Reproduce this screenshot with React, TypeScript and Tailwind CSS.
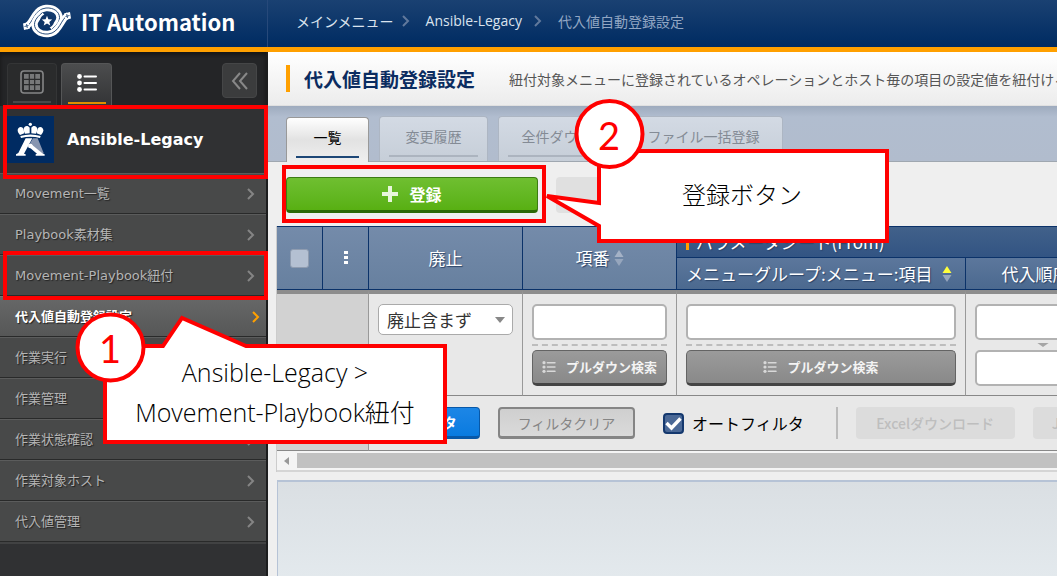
import type { ReactNode } from 'react';

const MENU_ITEMS = [
  'Movement一覧',
  'Playbook素材集',
  'Movement-Playbook紐付',
  '代入値自動登録設定',
  '作業実行',
  '作業管理',
  '作業状態確認',
  '作業対象ホスト',
  '代入値管理',
];
const ACTIVE_ITEM = '代入値自動登録設定';

function Chevron({ className }: { className: string }) {
  return (
    <svg viewBox="0 0 8 12" className={`h-3 w-2 shrink-0 ${className}`} fill="none" stroke="currentColor" strokeWidth="2">
      <path d="M1 1l5 5-5 5" />
    </svg>
  );
}

function ListIcon({ className }: { className: string }) {
  return (
    <svg viewBox="0 0 20 18" className={className} fill="currentColor">
      {[2.5, 9, 15.5].map((y) => (
        <g key={y}>
          <circle cx="2.5" cy={y} r="2.4" />
          <rect x="6.5" y={y - 1.1} width="13.5" height="2.2" rx="1" />
        </g>
      ))}
    </svg>
  );
}

function SortIcon({ active = false }: { active?: boolean }) {
  return (
    <svg viewBox="0 0 10 18" className="h-[18px] w-[10px] shrink-0">
      <path d="M5 1l4.5 7h-9z" fill={active ? '#ffff3c' : '#a4b2c6'} />
      <path d="M5 17l4.5-7h-9z" fill="#96a6bd" />
    </svg>
  );
}

function BrandLogo() {
  const band = 'M3 22.5C10 20 11 5 23 4c8-.6 13.500 4 13.500 9.500 0 5-4 8.500-8 12';
  return (
    <svg viewBox="0 0 48 34" className="h-[34px] w-12" fill="none">
      {[0, 180].map((turn) => (
        <g key={turn} transform={`rotate(${turn} 24 17)`}>
          <path d={band} stroke="#fff" strokeWidth="6.4" />
          <path d={band} stroke="#123a6c" strokeWidth="0.9" />
          <path d="M0 19.500l5.500-1.500 1.500 6.500-6 1.500z" fill="#fff" />
          <path d="M1.500 22.500l4-1M3.500 20l.8 4" stroke="#123a6c" strokeWidth="0.8" />
        </g>
      ))}
      <circle cx="24" cy="17" r="7" fill="#0f3567" />
      <path d="M24 11.800l1.400 3.500 3.800.2-2.900 2.400 1 3.700-3.300-2-3.300 2 1-3.700-2.900-2.400 3.800-.2z" fill="#fff" />
    </svg>
  );
}

function AnsibleIcon() {
  return (
    <svg viewBox="0 0 141 141" className="h-[47px] w-[47px] bg-[#002b62]">
      <g fill="#fff">
        <circle cx="70" cy="25" r="5" />
        <path d="M32 43c0-9 9-13 15-8 3 3 4 10 5 17l-13 5c-4-4-7-9-7-14z" />
        <path d="M109 43c0-9-9-13-15-8-3 3-4 10-5 17l13 5c4-4 7-9 7-14z" />
        <path d="M50 40c0-10 12-14 18-5v17l-14 1c-2-4-4-8-4-13z" />
        <path d="M91 40c0-10-12-14-18-5v17l14 1c2-4 4-8 4-13z" />
        <path d="M40 60c20-6 41-6 61 0l-2 6c-19-5-38-5-57 0z" />
        <path d="M56 67h20L51 113l5 2v4H27v-4l7-4z" />
      </g>
      <path d="M78 67h14l18 44-2 4-32-26-8-5z" fill="#8795b0" />
      <circle cx="70" cy="90" r="7" fill="#fff" />
      <path d="M72 84l36 29 5 2v4H86v-4l4-2-23-19z" fill="#fff" />
    </svg>
  );
}

function Header() {
  return (
    <header className="flex h-[52px] border-b-[5px] border-[#ffa000] bg-linear-to-b from-[#1a4172] to-[#002b62]">
      <div className="flex w-[268px] shrink-0 items-center border-r border-[#27497a] pb-[6px] pl-[23px]">
        <BrandLogo />
        <span className="ml-[10px] text-[22px] leading-8 font-bold whitespace-nowrap text-white">IT Automation</span>
      </div>
      <nav className="flex items-center gap-4 pb-[5px] pl-7 text-[14px] leading-5 whitespace-nowrap text-[#dbe3ee]">
        <a href="#main">メインメニュー</a>
        <Chevron className="-ml-2 text-[#61799c]" />
        <a href="#ansible" className="font-['Open_Sans','Noto_Sans_CJK_JP',sans-serif]">Ansible-Legacy</a>
        <Chevron className="-ml-1 text-[#61799c]" />
        <span className="text-[#91a6c3]">代入値自動登録設定</span>
      </nav>
    </header>
  );
}

function Sidebar() {
  return (
    <aside className="w-[268px] shrink-0 border-r-2 border-[#1c1d1e] bg-[#303133] font-['DejaVu_Sans','Noto_Sans_CJK_JP',sans-serif]">
      <div className="flex h-[54px] items-end gap-1 bg-[#242527] pl-[7px] shadow-[inset_0_3px_4px_#161616]">
        <button aria-label="グリッド" className="flex h-[43px] w-[50px] flex-col items-center justify-between rounded-t border border-b-0 border-[#343536] bg-[#2a2b2c] px-1 pt-[6px] pb-[3px]">
          <svg viewBox="0 0 24 24" className="h-6 w-6" fill="none" stroke="#858687">
            <rect x="1" y="1" width="22" height="22" rx="3" strokeWidth="1.6" />
            <path d="M4 4h16v16H4z" fill="#777879" stroke="none" />
            <path d="M9.300 3v18M14.700 3v18M3 9.300h18M3 14.700h18" stroke="#2a2b2c" strokeWidth="1.2" />
          </svg>
          <span className="h-[2px] w-[38px] bg-[#48494a]" />
        </button>
        <button aria-label="リスト" className="flex h-[43px] w-[51px] flex-col items-center justify-between rounded-t border border-b-0 border-[#555657] bg-linear-to-b from-[#4c4d4e] to-[#333436] px-1 pt-[10px] pb-[2px]">
          <ListIcon className="h-[18px] w-5 text-white" />
          <span className="h-[2px] w-[38px] bg-[#e08f00]" />
        </button>
        <button aria-label="閉じる" className="mr-[9px] mb-2 ml-auto flex h-[35px] w-[35px] items-center justify-center rounded-sm border border-[#454647] bg-[#3b3c3d] text-[#888]">
          <svg viewBox="0 0 18 18" className="h-[18px] w-[18px]" fill="none" stroke="currentColor" strokeWidth="2">
            <path d="M9 1L2 9l7 8M16 1L9 9l7 8" />
          </svg>
        </button>
      </div>
      <div className="flex h-[67px] items-center gap-[13px] pl-[7px]">
        <AnsibleIcon />
        <h2 className="text-[16px] leading-6 font-bold whitespace-nowrap text-white">Ansible-Legacy</h2>
      </div>
      <ul className="border-b-2 border-[#414243] text-[13px] leading-5">
        {MENU_ITEMS.map((item) => {
          const active = item === ACTIVE_ITEM;
          return (
            <li key={item}>
              <a
                href="#menu"
                className={`flex h-[41px] items-center justify-between border-t border-b pl-[15px] text-shadow-[1px_1px_1px_#222] ${
                  active
                    ? 'border-t-[#777] border-b-[#292a2a] bg-linear-to-b from-[#676868] to-[#565757] pr-[6px] font-bold text-white'
                    : 'border-t-[#5b5c5c] border-b-[#292a2a] bg-[#484949] pr-[11px] text-[#b5b5b5]'
                }`}
              >
                {item}
                <Chevron className={active ? 'text-[#ffa000]' : 'text-[#858585]'} />
              </a>
            </li>
          );
        })}
      </ul>
    </aside>
  );
}

function Tab({ children, active = false, className = '' }: { children: ReactNode; active?: boolean; className?: string }) {
  return (
    <button
      className={`flex h-[45px] shrink-0 flex-col items-center justify-between rounded-t border border-b-0 px-[9px] pt-[9px] pb-1 text-[14px] leading-5 whitespace-nowrap ${
        active ? 'border-[#999] bg-linear-to-b from-white via-[#e2e2e2] to-[#efefef] text-black' : 'border-[#adb6c3] bg-linear-to-b from-[#d3dae4] to-[#c6ced8] text-[#848b95]'
      } ${className}`}
    >
      {children}
      <span className={`h-[2px] w-full ${active ? 'bg-[#1d4777]' : 'bg-[#acb4bf]'}`} />
    </button>
  );
}

function TextField({ label }: { label: string }) {
  return <input type="text" aria-label={label} className="block h-9 w-full rounded-[5px] border-2 border-[#b2b2b2] bg-white px-2 text-[17px]" />;
}

function PulldownButton() {
  return (
    <>
      <div className="my-[4px] h-[2px] border-t-2 border-dashed border-[#bdbdbd]" />
      <button className="flex h-9 w-full items-center justify-center gap-[10px] rounded-[5px] border border-b-[3px] border-[#646464] border-b-[#444] bg-linear-to-b from-[#9b9b9b] to-[#898989] text-[13px] leading-5 font-bold whitespace-nowrap text-[#f4f4f4]">
        <ListIcon className="h-3 w-[14px] text-[#d8d8d8]" />
        プルダウン検索
      </button>
    </>
  );
}

const HEAD_CELL = 'border-t border-r border-b border-[#0b3269] p-0 font-normal';
const LIGHT_HEAD = 'bg-linear-to-b from-[#748baa] to-[#67809f]';
const FILTER_CELL = 'border-t-4 border-r border-b border-t-[#8d8d8d] border-r-[#999] border-b-[#888] px-[9px] pt-[10px] pb-[9px] align-top';

function FilterTable() {
  return (
    <table className="w-[1090px] table-fixed border-separate border-spacing-0 bg-[#e8e8e8] text-[17px] leading-6">
      <colgroup>
        <col className="w-[46px]" />
        <col className="w-[46px]" />
        <col className="w-[154px]" />
        <col className="w-[154px]" />
        <col className="w-[289px]" />
        <col className="w-[154px]" />
        <col />
      </colgroup>
      <thead className="text-white text-shadow-[1px_1px_1px_#2c4468]">
        <tr className="h-8">
          <th rowSpan={2} className={`${HEAD_CELL} ${LIGHT_HEAD}`}>
            <input type="checkbox" aria-label="全選択" className="mx-auto block h-[19px] w-[19px] appearance-none rounded-[3px] border border-[#8f9cb0] bg-[#b4c0d2]" />
          </th>
          <th rowSpan={2} className={`${HEAD_CELL} ${LIGHT_HEAD}`}>
            <svg viewBox="0 0 4 14" className="mx-auto h-[14px] w-1" fill="#fff">
              <path d="M0 0h4v3H0zM0 5h4v3H0zM0 10h4v3H0z" />
            </svg>
          </th>
          <th rowSpan={2} className={`${HEAD_CELL} ${LIGHT_HEAD}`}>廃止</th>
          <th rowSpan={2} className={`${HEAD_CELL} ${LIGHT_HEAD}`}>
            <span className="flex items-center justify-center gap-1">
              項番
              <SortIcon />
            </span>
          </th>
          <th colSpan={3} className="border-t border-b border-[#0b3269] bg-linear-to-b from-[#41618a] to-[#325483] p-0 pl-[9px] text-left font-normal">
            <span className="flex items-center gap-[7px] whitespace-nowrap">
              <span className="h-4 w-[3px] bg-[#ffa000]" />
              パラメータシート(From)
            </span>
          </th>
        </tr>
        <tr className="h-8">
          <th className="border-r border-b border-[#0b3269] bg-linear-to-b from-[#5c779c] to-[#4b698f] p-0 font-normal">
            <span className="flex items-center justify-between pr-[13px] pl-[9px] whitespace-nowrap">
              メニューグループ:メニュー:項目
              <SortIcon active />
            </span>
          </th>
          <th className="border-r border-b border-[#0b3269] bg-linear-to-b from-[#5c779c] to-[#4b698f] p-0 font-normal">
            <span className="flex items-center justify-center gap-1 whitespace-nowrap">
              代入順序
              <SortIcon />
            </span>
          </th>
          <th className="border-b border-[#0b3269] bg-[#4b698f] p-0" />
        </tr>
      </thead>
      <tbody>
        <tr>
          <td rowSpan={2} colSpan={2} className="border-t-4 border-r border-b border-t-[#8d8d8d] border-r-[#999] border-b-[#888] bg-[#d2d2d2]" />
          <td className={FILTER_CELL}>
            <div className="relative">
              <select aria-label="廃止" className="block h-[31px] w-full appearance-none rounded-[5px] border border-[#aaa] bg-white pl-2 text-[17px] leading-6 text-[#333]">
                <option>廃止含まず</option>
              </select>
              <svg viewBox="0 0 10 6" className="pointer-events-none absolute top-[13px] right-2 h-[6px] w-[10px]" fill="#888">
                <path d="M0 0h10L5 6z" />
              </svg>
            </div>
          </td>
          <td className={FILTER_CELL}>
            <TextField label="項番" />
            <PulldownButton />
          </td>
          <td className={FILTER_CELL}>
            <TextField label="メニューグループ:メニュー:項目" />
            <PulldownButton />
          </td>
          <td className={FILTER_CELL}>
            <TextField label="代入順序 開始" />
            <svg viewBox="0 0 14 5" className="mx-auto my-[3px] h-1 w-[14px]" fill="#a5a5a5">
              <path d="M0 0h14L7 5z" />
            </svg>
            <TextField label="代入順序 終了" />
          </td>
          <td className={FILTER_CELL} />
        </tr>
        <tr>
          <td colSpan={5} className="border-b border-[#888] p-0">
            <div className="flex h-[54px] items-center gap-[18px] pl-[9px] text-[14px] leading-5 whitespace-nowrap">
              <button className="h-8 w-[102px] rounded border border-b-[3px] border-[#0758a8] bg-linear-to-b from-[#1c86e6] to-[#087be0] font-bold text-white">フィルタ</button>
              <button className="h-8 w-[137px] rounded border-2 border-b-[3px] border-[#858585] bg-linear-to-b from-[#cfcfcf] to-[#dadada] text-[#858585]">フィルタクリア</button>
              <label className="ml-[10px] flex items-center gap-2 text-[16px] text-black">
                <span className="relative">
                  <input type="checkbox" defaultChecked className="block h-[21px] w-[21px] appearance-none rounded border-2 border-[#14386e] bg-[#4a6896]" />
                  <svg viewBox="0 0 21 21" className="pointer-events-none absolute inset-0 h-[21px] w-[21px]" fill="none" stroke="#fff" strokeWidth="3.4">
                    <path d="M3.500 10l5 5 9-9.500" />
                  </svg>
                </span>
                オートフィルタ
              </label>
              <span className="ml-[14px] h-8 border-l-2 border-[#bbb]" />
              <button disabled className="h-8 w-[159px] rounded bg-[#dcdcdc] font-medium text-[#bebebe]">Excelダウンロード</button>
              <button disabled className="h-8 w-[159px] rounded bg-[#dcdcdc] font-medium text-[#bebebe]">JSONダウンロード</button>
            </div>
          </td>
        </tr>
      </tbody>
    </table>
  );
}

function Main() {
  return (
    <main className="flex min-w-0 flex-1 flex-col bg-[#efefef]">
      <div className="flex h-[54px] items-center overflow-hidden border-b border-[#e0e0e0] bg-linear-to-b from-white to-[#ececec] pl-[18px] whitespace-nowrap">
        <span className="h-[27px] w-1 shrink-0 bg-[#ffa000]" />
        <h1 className="ml-[14px] text-[19px] leading-7 font-bold text-[#0b2c60]">代入値自動登録設定</h1>
        <p className="ml-[34px] text-[14px] leading-5 text-[#555]">
          紐付対象メニューに登録されているオペレーションとホスト毎の項目の設定値を紐付けるMovementを管理します。
        </p>
      </div>
      <div className="flex h-14 items-end gap-[10px] border-b border-[#9fa7b0] bg-linear-to-b from-[#9eabbe] via-[#b1bdcf] via-20% to-[#b1bccd] pl-[18px]">
        <Tab active className="-mb-px w-[83px]">一覧</Tab>
        <Tab className="w-[109px]">変更履歴</Tab>
        <Tab className="w-[285px]">全件ダウンロード・ファイル一括登録</Tab>
      </div>
      <div className="flex h-16 items-center gap-[18px] pt-px pl-[18px]">
        <button className="flex h-9 w-[252px] shrink-0 items-center justify-center gap-[11px] rounded border border-b-[3px] border-[#3c7b13] border-b-[#2c6806] bg-linear-to-b from-[#6fbf30] to-[#58b012] text-[16px] leading-6 font-bold text-white">
          <svg viewBox="0 0 16 16" className="h-4 w-4" fill="#e8f6dc">
            <path d="M6 0h4v6h6v4h-6v6H6v-6H0V6h6z" />
          </svg>
          登録
        </button>
        <button disabled aria-label="一括" className="h-9 w-[137px] shrink-0 rounded bg-[#e0e0e0]" />
      </div>
      <div className="ml-2 overflow-hidden border-l border-[#ccc]">
        <FilterTable />
        <div className="flex h-[21px] items-center border-b-2 border-[#d5d5d5] bg-[#f4f4f4]">
          <svg viewBox="0 0 5 8" className="ml-[7px] h-2 w-[5px]" fill="#999">
            <path d="M5 0v8L0 4z" />
          </svg>
          <span className="ml-2 h-[15px] flex-1 bg-[#c1c1c1]" />
        </div>
      </div>
      <div className="mt-2 ml-[9px] flex-1 border-t-2 border-l border-[#b6c3d6] bg-linear-to-b from-[#dadfe3] to-[#e3e9ed]" />
    </main>
  );
}

// Numbered guide boxes that float over the console
function Annotations() {
  return (
    <div className="pointer-events-none absolute inset-0 overflow-hidden">
      <div className="absolute top-[105px] left-[3px] h-[74px] w-[265px] border-4 border-[#ff0000]" />
      <div className="absolute top-[251px] left-[3px] h-[49px] w-[265px] border-4 border-[#ff0000]" />
      <div className="absolute top-[165px] left-[282px] h-[58px] w-[264px] border-4 border-[#ff0000]" />
      <svg className="absolute top-0 left-0 h-[576px] w-[1057px]" fill="#fff" stroke="#ff0000" strokeWidth="4">
        <path d="M105 346h58l19-28 64 28h199v96H105z" />
        <circle cx="110.5" cy="347.5" r="33" />
        <path d="M599 151h288v90H599v-15l-52-30 52 7z" />
        <circle cx="609.5" cy="134" r="33" />
      </svg>
      <p className="absolute top-[352px] left-[105px] w-[340px] text-center font-['Open_Sans','Noto_Sans_CJK_JP',sans-serif] text-[25px] leading-[40px] font-light whitespace-nowrap text-black">
        Ansible-Legacy &gt;
        <br />
        Movement-Playbook紐付
      </p>
      <p className="absolute top-[174px] left-[598px] w-[288px] text-center text-[24px] leading-[40px] font-light text-black">登録ボタン</p>
      <span className="absolute top-[324px] left-[90px] w-10 text-center font-['Lato',sans-serif] text-[38px] leading-[48px] text-[#ff0000]">1</span>
      <span className="absolute top-[111px] left-[589px] w-10 text-center font-['Lato',sans-serif] text-[38px] leading-[48px] text-[#ff0000]">2</span>
    </div>
  );
}

export default function App() {
  return (
    <div className="relative flex min-h-screen flex-col overflow-hidden font-['Noto_Sans_CJK_JP',sans-serif]">
      <Header />
      <div className="flex flex-1">
        <Sidebar />
        <Main />
      </div>
      <Annotations />
    </div>
  );
}
